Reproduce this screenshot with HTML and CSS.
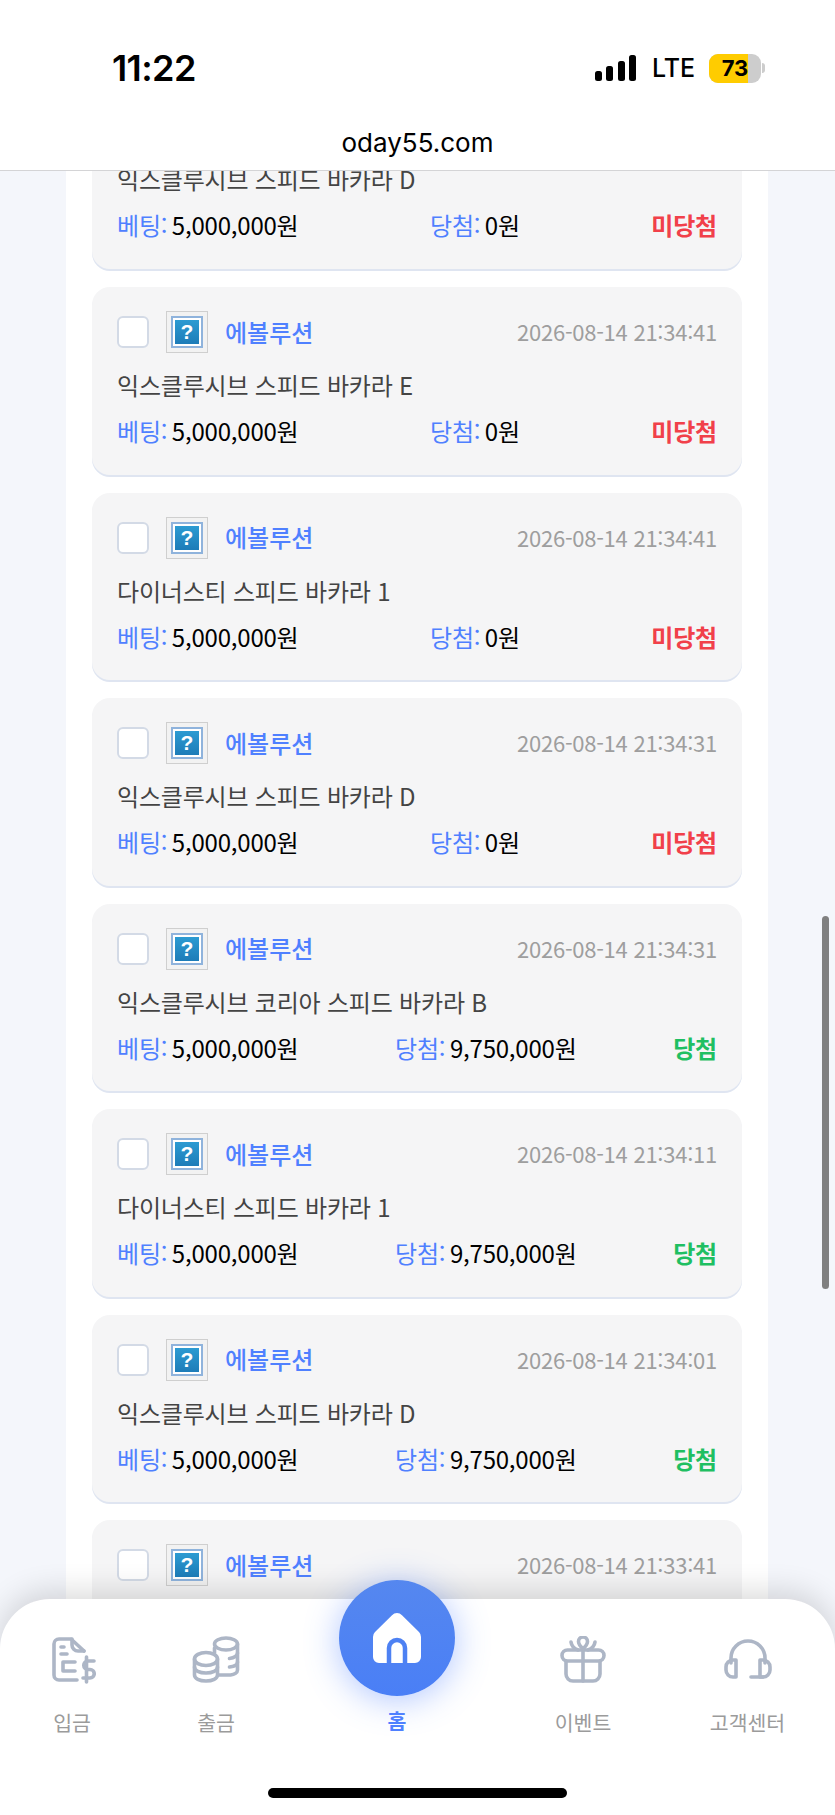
FILE: index.html
```html
<!DOCTYPE html>
<html lang="ko">
<head>
    <meta charset="UTF-8">
    <meta name="viewport" content="width=device-width, initial-scale=1.0">
    <title>oday55.com</title>
    <link rel="stylesheet" href="styles.css">
</head>
<body>
<div class="screen">

    <!-- Status bar + address -->
    <header class="top">
        <div class="status">
            <span class="clock">11:22</span>
            <div class="status-right">
                <div class="signal"><i class="b1"></i><i class="b2"></i><i class="b3"></i><i class="b4"></i></div>
                <span class="lte">LTE</span>
                <div class="battery"><span class="battery-fill"></span><span class="battery-num">73</span></div>
                <span class="battery-tip"></span>
            </div>
        </div>
        <div class="url">oday55.com</div>
    </header>

    <!-- Bet list -->
    <main class="content">
        <div class="panel">
            <div class="card card-first">
                <div class="game">익스클루시브 스피드 바카라 D</div>
                <div class="card-row"><span class="amount"><b>베팅:</b> 5,000,000원</span><span class="amount"><b>당첨:</b> 0원</span><span class="lose">미당첨</span></div>
            </div>
            <div class="card">
                <div class="card-head"><span class="check"></span><span class="game-icon"><span class="icon-frame"><span class="icon-q">?</span></span></span><span class="vendor">에볼루션</span><span class="time">2026-08-14 21:34:41</span></div>
                <div class="game">익스클루시브 스피드 바카라 E</div>
                <div class="card-row"><span class="amount"><b>베팅:</b> 5,000,000원</span><span class="amount"><b>당첨:</b> 0원</span><span class="lose">미당첨</span></div>
            </div>
            <div class="card">
                <div class="card-head"><span class="check"></span><span class="game-icon"><span class="icon-frame"><span class="icon-q">?</span></span></span><span class="vendor">에볼루션</span><span class="time">2026-08-14 21:34:41</span></div>
                <div class="game">다이너스티 스피드 바카라 1</div>
                <div class="card-row"><span class="amount"><b>베팅:</b> 5,000,000원</span><span class="amount"><b>당첨:</b> 0원</span><span class="lose">미당첨</span></div>
            </div>
            <div class="card">
                <div class="card-head"><span class="check"></span><span class="game-icon"><span class="icon-frame"><span class="icon-q">?</span></span></span><span class="vendor">에볼루션</span><span class="time">2026-08-14 21:34:31</span></div>
                <div class="game">익스클루시브 스피드 바카라 D</div>
                <div class="card-row"><span class="amount"><b>베팅:</b> 5,000,000원</span><span class="amount"><b>당첨:</b> 0원</span><span class="lose">미당첨</span></div>
            </div>
            <div class="card">
                <div class="card-head"><span class="check"></span><span class="game-icon"><span class="icon-frame"><span class="icon-q">?</span></span></span><span class="vendor">에볼루션</span><span class="time">2026-08-14 21:34:31</span></div>
                <div class="game">익스클루시브 코리아 스피드 바카라 B</div>
                <div class="card-row"><span class="amount"><b>베팅:</b> 5,000,000원</span><span class="amount"><b>당첨:</b> 9,750,000원</span><span class="win">당첨</span></div>
            </div>
            <div class="card">
                <div class="card-head"><span class="check"></span><span class="game-icon"><span class="icon-frame"><span class="icon-q">?</span></span></span><span class="vendor">에볼루션</span><span class="time">2026-08-14 21:34:11</span></div>
                <div class="game">다이너스티 스피드 바카라 1</div>
                <div class="card-row"><span class="amount"><b>베팅:</b> 5,000,000원</span><span class="amount"><b>당첨:</b> 9,750,000원</span><span class="win">당첨</span></div>
            </div>
            <div class="card">
                <div class="card-head"><span class="check"></span><span class="game-icon"><span class="icon-frame"><span class="icon-q">?</span></span></span><span class="vendor">에볼루션</span><span class="time">2026-08-14 21:34:01</span></div>
                <div class="game">익스클루시브 스피드 바카라 D</div>
                <div class="card-row"><span class="amount"><b>베팅:</b> 5,000,000원</span><span class="amount"><b>당첨:</b> 9,750,000원</span><span class="win">당첨</span></div>
            </div>
            <div class="card">
                <div class="card-head"><span class="check"></span><span class="game-icon"><span class="icon-frame"><span class="icon-q">?</span></span></span><span class="vendor">에볼루션</span><span class="time">2026-08-14 21:33:41</span></div>
            </div>
        </div>
        <div class="scrollbar"></div>
    </main>

    <!-- Bottom nav -->
    <nav class="nav">
        <a class="nav-item">
            <svg class="nav-icon" viewBox="0 0 48 48" fill="none" stroke="#adb6c6" stroke-width="3.6" stroke-linecap="round" stroke-linejoin="round">
                <path d="M29 44H11a5 5 0 0 1-5-5V8a5 5 0 0 1 5-5h12l13 12"/>
                <path d="M24 3v6a6 6 0 0 0 6 6h6"/>
                <path d="M13 11h3M13 18h6"/>
                <path d="M27 26H15v9h12"/>
                <path d="M46 25h-6a4 4 0 0 0 0 8.500h2a4 4 0 0 1 0 8.500h-7"/>
                <path d="M38.500 21v25"/>
            </svg>
            <span class="nav-label">입금</span>
        </a>
        <a class="nav-item">
            <svg class="nav-icon" viewBox="0 0 48 48" fill="none" stroke="#adb6c6" stroke-width="3.6" stroke-linecap="round" stroke-linejoin="round">
                <ellipse cx="34" cy="8" rx="11.500" ry="6"/>
                <path d="M45.500 8v26c0 2.500-3 4.500-7 5H27"/>
                <path d="M45.500 17c0 2.500-3 5-8 5.500M45.500 26c0 2.500-3 4.500-8 5"/>
                <path d="M22.500 12c0 0 0 3 0 5"/>
                <ellipse cx="14" cy="23" rx="11.500" ry="6.500"/>
                <path d="M2.500 23v16c0 3.500 5 6 11.500 6s11.500-2.500 11.500-6V23"/>
                <path d="M2.500 31c0 3.500 5 6 11.500 6s11.500-2.500 11.500-6"/>
            </svg>
            <span class="nav-label">출금</span>
        </a>
        <a class="nav-item nav-home">
            <span class="home-btn">
                <svg class="home-icon" viewBox="0 0 52 52">
                    <path fill="#fff" d="M21 3.200a7 7 0 0 1 10 0l17 16.800a7 7 0 0 1 2 5v20a6 6 0 0 1-6 6H8a6 6 0 0 1-6-6V25a7 7 0 0 1 2-5z"/>
                    <path fill="none" stroke="#4d81f3" stroke-width="4.500" d="M18 51V36a8 8 0 0 1 16 0v15"/>
                </svg>
            </span>
            <span class="nav-label">홈</span>
        </a>
        <a class="nav-item">
            <svg class="nav-icon" viewBox="0 0 48 48" fill="none" stroke="#adb6c6" stroke-width="3.6" stroke-linecap="round" stroke-linejoin="round">
                <rect x="3" y="14" width="42" height="11" rx="5.500"/>
                <path d="M7 25v13a7 7 0 0 0 7 7h20a7 7 0 0 0 7-7V25"/>
                <path d="M24 14v31"/>
                <path d="M24 13c-3-3-4.500-5-4.500-7.500a4.500 4.500 0 0 1 9 0c0 2.500-1.500 4.500-4.500 7.500z"/>
                <path d="M12 6c.5 4 3 6.500 7 8M36 6c-.5 4-3 6.500-7 8"/>
            </svg>
            <span class="nav-label">이벤트</span>
        </a>
        <a class="nav-item">
            <svg class="nav-icon" viewBox="0 0 48 48" fill="none" stroke="#adb6c6" stroke-width="3.6" stroke-linecap="round" stroke-linejoin="round">
                <path d="M7 27v-5a17 17 0 0 1 34 0v5"/>
                <path d="M12 24v17H9a7 7 0 0 1-7-7v-3a7 7 0 0 1 7-7z"/>
                <path d="M36 24v17h3a7 7 0 0 0 7-7v-3a7 7 0 0 0-7-7z"/>
                <path d="M27 41h12"/>
            </svg>
            <span class="nav-label">고객센터</span>
        </a>
        <div class="home-bar"></div>
    </nav>
</div>
</body>
</html>
```

FILE: styles.css
```css
* {
    box-sizing: border-box;
}

body {
    margin: 0;
    font-family: "Noto Sans CJK KR", "Noto Sans", sans-serif;
    background: #f4f6fb;
}

.screen {
    width: 835px;
    height: 1815px;
    display: flex;
    flex-direction: column;
    position: relative;
    overflow: hidden;
}

/* Status bar */
.top {
    height: 171px;
    flex-shrink: 0;
    background: #fff;
    border-bottom: 1px solid #d4d4d6;
    position: relative;
    z-index: 2;
}

.status {
    height: 118px;
    padding: 50px 70px 0 112px;
    display: flex;
    justify-content: space-between;
    align-items: flex-start;
    font-family: Inter, sans-serif;
    color: #000;
}

.clock {
    font-size: 36px;
    line-height: 36px;
    font-weight: 600;
    letter-spacing: -0.6px;
}

.status-right {
    display: flex;
    align-items: center;
    height: 36px;
}

.signal {
    display: flex;
    align-items: flex-end;
    gap: 4.5px;
    height: 26px;
    margin-right: 16px;
}

.signal i {
    width: 7px;
    border-radius: 2.5px;
    background: #000;
}

.signal .b1 { height: 10px; }
.signal .b2 { height: 15px; }
.signal .b3 { height: 20px; }
.signal .b4 { height: 26px; }

.lte {
    font-size: 25px;
    line-height: 30px;
    font-weight: 500;
    width: 57px;
}

.battery {
    width: 52px;
    height: 29px;
    border-radius: 9px;
    background: #cdcdcd;
    position: relative;
    overflow: hidden;
}

.battery-fill {
    position: absolute;
    left: 0;
    top: 0;
    bottom: 0;
    width: 39px;
    background: #ffcc00;
}

.battery-num {
    position: relative;
    display: block;
    text-align: center;
    font-size: 22px;
    line-height: 29px;
    font-weight: 700;
}

.battery-tip {
    width: 3px;
    height: 10px;
    margin-left: 1px;
    border-radius: 0 3px 3px 0;
    background: #cdcdcd;
}

.url {
    text-align: center;
    font-family: Inter, sans-serif;
    font-size: 26px;
    line-height: 50px;
    color: #000;
}

/* List */
.content {
    flex: 1;
    position: relative;
    overflow: hidden;
}

.panel {
    width: 702px;
    margin: -8px 0 0 66px;
    padding: 0 26px;
    background: #fff;
    display: flex;
    flex-direction: column;
    gap: 18px;
}

.card {
    height: 187.5px;
    flex-shrink: 0;
    padding: 24px 25px 0;
    background: #f5f5f6;
    border-radius: 18px;
    box-shadow: 0 2px 0 #dfe5f1;
}

/* top of this one is scrolled away under the header */
.card-first {
    height: 106px;
    padding-top: 0;
    border-radius: 0 0 18px 18px;
}

.card-first .game {
    margin-top: 0;
}

.card-head {
    display: flex;
    align-items: center;
    height: 42px;
}

.check {
    width: 32px;
    height: 32px;
    background: #fff;
    border: 2px solid #d3dae6;
    border-radius: 6px;
}

.game-icon {
    width: 42px;
    height: 42px;
    margin-left: 17px;
    padding: 4px;
    border: 1px solid #cfcfcf;
    background: #f2f2f2;
}

.icon-frame {
    display: block;
    width: 32px;
    height: 32px;
    padding: 2px;
    background: #fff;
    border: 2px solid #8fb3dc;
}

.icon-q {
    display: block;
    width: 24px;
    height: 24px;
    background: linear-gradient(#2c9bd2, #1d7cb8);
    color: #fff;
    font-family: "Liberation Sans", sans-serif;
    font-size: 21px;
    font-weight: 700;
    line-height: 24px;
    text-align: center;
}

.vendor {
    margin-left: 17px;
    margin-top: -2px;
    font-size: 24px;
    font-weight: 500;
    color: #4f80ff;
}

.time {
    margin-left: auto;
    margin-top: -2px;
    font-size: 22px;
    color: #9e9e9e;
    letter-spacing: -0.25px;
}

.game {
    margin-top: 16px;
    font-size: 24px;
    line-height: 32px;
    letter-spacing: -0.2px;
    color: #444;
}

.card-row {
    margin-top: 14px;
    display: flex;
    justify-content: space-between;
    align-items: center;
    font-size: 24px;
    line-height: 32px;
    letter-spacing: -0.2px;
    word-spacing: -2px;
    color: #000;
}

.amount b {
    font-weight: 400;
    color: #4f80ff;
}

.lose,
.win {
    font-size: 24px;
    font-weight: 700;
}

.lose {
    color: #f1404a;
}

.win {
    color: #1fbf62;
}

.scrollbar {
    position: absolute;
    right: 6px;
    top: 745px;
    width: 7px;
    height: 373px;
    border-radius: 3.5px;
    background: #808080;
}

/* Bottom nav */
.nav {
    position: absolute;
    left: 0;
    right: 0;
    bottom: 0;
    height: 216px;
    z-index: 3;
    display: grid;
    grid-template-columns: 144px 144px 218px 154px 175px;
    background: #fff;
    border-radius: 50px 50px 0 0;
    box-shadow: 0 -8px 30px rgba(0, 0, 0, 0.14);
}

.nav-item {
    display: flex;
    flex-direction: column;
    align-items: center;
    padding-top: 37px;
}

.nav-icon {
    width: 48px;
    height: 48px;
}

.nav-label {
    margin-top: 23px;
    font-size: 20.5px;
    line-height: 30px;
    color: #9b9b9b;
}

.nav-home {
    padding-top: 0;
}

.nav-home .nav-label {
    margin-top: 22px;
    font-weight: 700;
    color: #4f80ff;
}

.home-btn {
    width: 116px;
    height: 116px;
    margin-top: -19px;
    margin-bottom: -13px;
    display: flex;
    align-items: center;
    justify-content: center;
    border-radius: 50%;
    background: linear-gradient(#5587ef, #4a7ff6);
    box-shadow: 0 4px 34px rgba(79, 128, 255, 0.45);
}

.home-icon {
    width: 52px;
    height: 52px;
}

.home-bar {
    position: absolute;
    left: 268px;
    bottom: 17px;
    width: 299px;
    height: 10px;
    border-radius: 5px;
    background: #000;
}
```
